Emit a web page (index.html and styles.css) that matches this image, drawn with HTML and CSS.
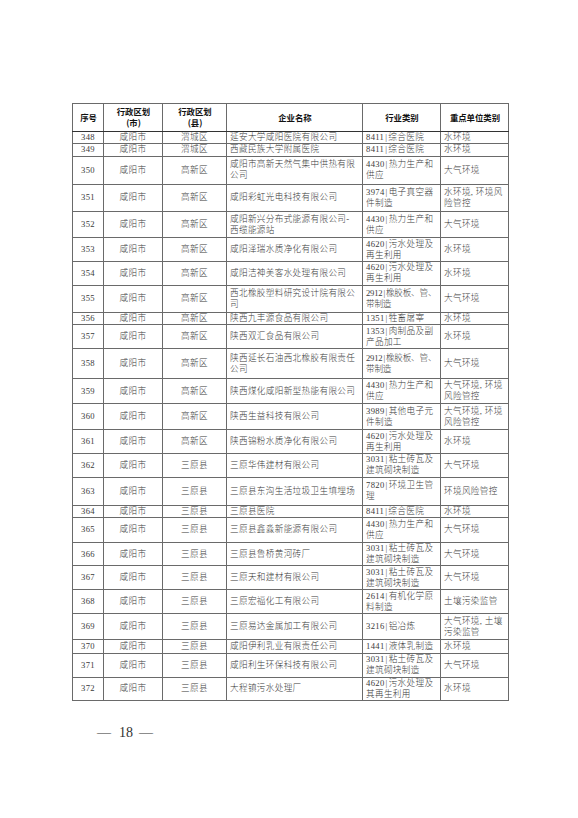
FILE: index.html
```html
<!DOCTYPE html>
<html lang="zh-CN">
<head>
<meta charset="utf-8">
<title>重点排污单位名录</title>
<link rel="stylesheet" href="styles.css">
</head>
<body>
<div class="page">
<table class="list">
<colgroup>
<col class="c-no"><col class="c-city"><col class="c-county"><col class="c-name"><col class="c-ind"><col class="c-type">
</colgroup>
<thead>
<tr class="h28">
<th>序号</th><th>行政区划<br>(市)</th><th>行政区划<br>(县)</th><th>企业名称</th><th>行业类别</th><th>重点单位类别</th>
</tr>
</thead>
<tbody>
<tr class="h12"><td class="ctr">348</td><td class="ctr">咸阳市</td><td class="ctr">渭城区</td><td>延安大学咸阳医院有限公司</td><td>8411<span class="bar">|</span>综合医院</td><td>水环境</td></tr>
<tr class="h13"><td class="ctr">349</td><td class="ctr">咸阳市</td><td class="ctr">渭城区</td><td>西藏民族大学附属医院</td><td>8411<span class="bar">|</span>综合医院</td><td>水环境</td></tr>
<tr class="h28"><td class="ctr">350</td><td class="ctr">咸阳市</td><td class="ctr">高新区</td><td>咸阳市高新天然气集中供热有限<br>公司</td><td>4430<span class="bar">|</span>热力生产和<br>供应</td><td>大气环境</td></tr>
<tr class="h28"><td class="ctr">351</td><td class="ctr">咸阳市</td><td class="ctr">高新区</td><td>咸阳彩虹光电科技有限公司</td><td>3974<span class="bar">|</span>电子真空器<br>件制造</td><td>水环境, 环境风<br>险管控</td></tr>
<tr class="h26"><td class="ctr">352</td><td class="ctr">咸阳市</td><td class="ctr">高新区</td><td>咸阳新兴分布式能源有限公司-<br>西缆能源站</td><td>4430<span class="bar">|</span>热力生产和<br>供应</td><td>大气环境</td></tr>
<tr class="h23"><td class="ctr">353</td><td class="ctr">咸阳市</td><td class="ctr">高新区</td><td>咸阳泽瑞水质净化有限公司</td><td>4620<span class="bar">|</span>污水处理及<br>再生利用</td><td>水环境</td></tr>
<tr class="h24"><td class="ctr">354</td><td class="ctr">咸阳市</td><td class="ctr">高新区</td><td>咸阳洁神美客水处理有限公司</td><td>4620<span class="bar">|</span>污水处理及<br>再生利用</td><td>水环境</td></tr>
<tr class="h27"><td class="ctr">355</td><td class="ctr">咸阳市</td><td class="ctr">高新区</td><td>西北橡胶塑料研究设计院有限公<br>司</td><td class="tight">2912<span class="bar">|</span>橡胶板、管、<br>带制造</td><td>大气环境</td></tr>
<tr class="h12"><td class="ctr">356</td><td class="ctr">咸阳市</td><td class="ctr">高新区</td><td>陕西九丰源食品有限公司</td><td>1351<span class="bar">|</span>牲畜屠宰</td><td>水环境</td></tr>
<tr class="h23"><td class="ctr">357</td><td class="ctr">咸阳市</td><td class="ctr">高新区</td><td>陕西双汇食品有限公司</td><td>1353<span class="bar">|</span>肉制品及副<br>产品加工</td><td>水环境</td></tr>
<tr class="h31"><td class="ctr">358</td><td class="ctr">咸阳市</td><td class="ctr">高新区</td><td>陕西延长石油西北橡胶有限责任<br>公司</td><td class="tight">2912<span class="bar">|</span>橡胶板、管、<br>带制造</td><td>大气环境</td></tr>
<tr class="h25"><td class="ctr">359</td><td class="ctr">咸阳市</td><td class="ctr">高新区</td><td>陕西煤化咸阳新型热能有限公司</td><td>4430<span class="bar">|</span>热力生产和<br>供应</td><td>大气环境, 环境<br>风险管控</td></tr>
<tr class="h26"><td class="ctr">360</td><td class="ctr">咸阳市</td><td class="ctr">高新区</td><td>陕西生益科技有限公司</td><td>3989<span class="bar">|</span>其他电子元<br>件制造</td><td>大气环境, 环境<br>风险管控</td></tr>
<tr class="h23"><td class="ctr">361</td><td class="ctr">咸阳市</td><td class="ctr">高新区</td><td>陕西锦粉水质净化有限公司</td><td>4620<span class="bar">|</span>污水处理及<br>再生利用</td><td>水环境</td></tr>
<tr class="h24"><td class="ctr">362</td><td class="ctr">咸阳市</td><td class="ctr">三原县</td><td>三原华伟建材有限公司</td><td>3031<span class="bar">|</span>粘土砖瓦及<br>建筑砌块制造</td><td>大气环境</td></tr>
<tr class="h28"><td class="ctr">363</td><td class="ctr">咸阳市</td><td class="ctr">三原县</td><td>三原县东沟生活垃圾卫生填埋场</td><td>7820<span class="bar">|</span>环境卫生管<br>理</td><td>环境风险管控</td></tr>
<tr class="h12"><td class="ctr">364</td><td class="ctr">咸阳市</td><td class="ctr">三原县</td><td>三原县医院</td><td>8411<span class="bar">|</span>综合医院</td><td>水环境</td></tr>
<tr class="h25"><td class="ctr">365</td><td class="ctr">咸阳市</td><td class="ctr">三原县</td><td>三原县鑫淼新能源有限公司</td><td>4430<span class="bar">|</span>热力生产和<br>供应</td><td>大气环境</td></tr>
<tr class="h23"><td class="ctr">366</td><td class="ctr">咸阳市</td><td class="ctr">三原县</td><td>三原县鲁桥黄河砖厂</td><td>3031<span class="bar">|</span>粘土砖瓦及<br>建筑砌块制造</td><td>大气环境</td></tr>
<tr class="h24"><td class="ctr">367</td><td class="ctr">咸阳市</td><td class="ctr">三原县</td><td>三原天和建材有限公司</td><td>3031<span class="bar">|</span>粘土砖瓦及<br>建筑砌块制造</td><td>大气环境</td></tr>
<tr class="h24"><td class="ctr">368</td><td class="ctr">咸阳市</td><td class="ctr">三原县</td><td>三原宏福化工有限公司</td><td>2614<span class="bar">|</span>有机化学原<br>料制造</td><td>土壤污染监管</td></tr>
<tr class="h26"><td class="ctr">369</td><td class="ctr">咸阳市</td><td class="ctr">三原县</td><td>三原易达金属加工有限公司</td><td>3216<span class="bar">|</span>铝冶炼</td><td>大气环境, 土壤<br>污染监管</td></tr>
<tr class="h14"><td class="ctr">370</td><td class="ctr">咸阳市</td><td class="ctr">三原县</td><td>咸阳伊利乳业有限责任公司</td><td>1441<span class="bar">|</span>液体乳制造</td><td>水环境</td></tr>
<tr class="h23"><td class="ctr">371</td><td class="ctr">咸阳市</td><td class="ctr">三原县</td><td>咸阳利生环保科技有限公司</td><td>3031<span class="bar">|</span>粘土砖瓦及<br>建筑砌块制造</td><td>大气环境</td></tr>
<tr class="h23"><td class="ctr">372</td><td class="ctr">咸阳市</td><td class="ctr">三原县</td><td>大程镇污水处理厂</td><td>4620<span class="bar">|</span>污水处理及<br>其再生利用</td><td>水环境</td></tr>
</tbody>
</table>
<div class="pageno"><span class="dash">—</span><span class="num">18</span><span class="dash">—</span></div>
</div>
</body>
</html>
```
FILE: styles.css
```css
html, body {
  margin: 0;
  padding: 0;
  background: #ffffff;
}

.page {
  width: 578px;
  height: 818px;
  box-sizing: border-box;
  padding: 103px 0 0 72px;
  font-family: "Liberation Serif", "Noto Sans CJK SC", serif;
  color: #333333;
}

.list {
  width: 436px;
  table-layout: fixed;
  border-collapse: collapse;
  border: 1.5px solid #1a1a1a;
}

.c-no { width: 31px; }
.c-city { width: 59px; }
.c-county { width: 64px; }
.c-name { width: 136px; }
.c-ind { width: 78px; }
.c-type { width: 68px; }

.list th,
.list td {
  border: 1px solid #6a6a6a;
  padding: 0 2px 0 3px;
  font-size: 8.6px;
  line-height: 11px;
  vertical-align: middle;
  white-space: nowrap;
  overflow: hidden;
}

.list th {
  font-family: "Noto Sans CJK SC", sans-serif;
  font-weight: 700;
  color: #111111;
  text-align: center;
  font-size: 8.4px;
  line-height: 11px;
  border-bottom: 1px solid #333333;
}

.list td {
  text-align: left;
  font-weight: 300;
  letter-spacing: 0.35px;
  color: #3a3a3a;
}

.list td.ctr {
  text-align: center;
  padding: 0;
}

.list td.tight {
  letter-spacing: -0.2px;
  padding: 0 0 0 3px;
}

.bar {
  padding: 0 1px;
  color: #555555;
}

.h12 { height: 12.3px; }
.h13 { height: 12.7px; }
.h14 { height: 14px; }
.h23 { height: 23.4px; }
.h24 { height: 24px; }
.h25 { height: 25px; }
.h26 { height: 26px; }
.h27 { height: 27.3px; }
.h28 { height: 27.8px; }
.h31 { height: 30.6px; }

.pageno {
  margin: 23px 0 0 25px;
  display: flex;
  align-items: center;
  font-family: "Liberation Serif", serif;
  font-size: 14px;
  line-height: 18px;
  color: #333333;
}

.pageno .dash {
  display: inline-block;
}

.pageno .num {
  margin: 0 6px 0 8px;
}
```
